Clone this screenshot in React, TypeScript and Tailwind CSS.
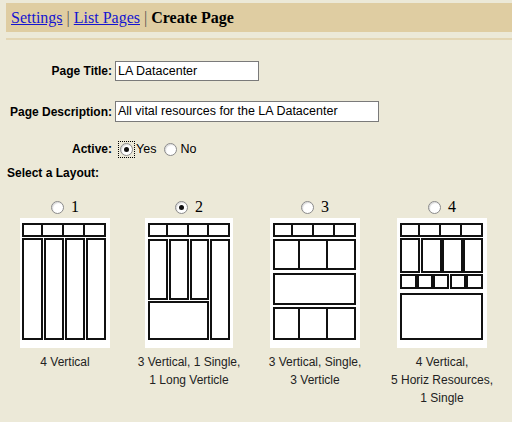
import React from 'react';

type Box = [number, number, number, number];

interface LayoutOption {
  id: number;
  width: number;
  boxes: Box[];
  dividers: [number, number, number][]; // x, y1, y2
  caption: string[];
}

const layouts: LayoutOption[] = [
  {
    id: 1,
    width: 90,
    boxes: [
      [3, 6, 82, 12],
      [3, 21, 19, 100],
      [25, 21, 18, 100],
      [46, 21, 18, 100],
      [67, 21, 18, 100],
    ],
    dividers: [
      [22, 6, 18],
      [43, 6, 18],
      [64, 6, 18],
    ],
    caption: ['4 Vertical'],
  },
  {
    id: 2,
    width: 88,
    boxes: [
      [4, 6, 80, 12],
      [4, 22, 18, 59],
      [25, 22, 18, 59],
      [46, 22, 17, 59],
      [66, 22, 18, 99],
      [4, 84, 59, 37],
    ],
    dividers: [
      [22, 6, 18],
      [43, 6, 18],
      [63, 6, 18],
    ],
    caption: ['3 Vertical, 1 Single,', '1 Long Verticle'],
  },
  {
    id: 3,
    width: 90,
    boxes: [
      [4, 6, 81, 12],
      [4, 22, 81, 29],
      [4, 56, 81, 30],
      [4, 90, 81, 31],
    ],
    dividers: [
      [22, 6, 18],
      [43, 6, 18],
      [64, 6, 18],
      [29, 22, 51],
      [57, 22, 51],
      [29, 90, 121],
      [57, 90, 121],
    ],
    caption: ['3 Vertical, Single,', '3 Verticle'],
  },
  {
    id: 4,
    width: 90,
    boxes: [
      [4, 6, 81, 12],
      [4, 21, 18, 33],
      [25, 21, 19, 33],
      [46, 21, 19, 33],
      [67, 21, 18, 33],
      [4, 57, 15, 13],
      [21, 57, 14, 13],
      [37, 57, 14, 13],
      [54, 57, 14, 13],
      [70, 57, 15, 13],
      [4, 76, 81, 45],
    ],
    dividers: [
      [22, 6, 18],
      [43, 6, 18],
      [64, 6, 18],
    ],
    caption: ['4 Vertical,', '5 Horiz Resources,', '1 Single'],
  },
];

function Radio({ checked, focus }: { checked?: boolean; focus?: boolean }) {
  const dot = (
    <span className="w-[13px] h-[13px] rounded-full border border-[#8a8a8a] bg-white flex items-center justify-center shadow-[inset_1px_1px_1px_rgba(0,0,0,0.15)]">
      {checked && <span className="w-[5px] h-[5px] rounded-full bg-[#111]" />}
    </span>
  );
  if (focus) {
    return <span className="border border-dotted border-black p-[1px] flex">{dot}</span>;
  }
  return dot;
}

function LayoutPicture({ layout }: { layout: LayoutOption }) {
  return (
    <svg width={layout.width} height={130} className="bg-white block">
      {layout.boxes.map(([x, y, w, h], i) => (
        <rect key={i} x={x} y={y} width={w} height={h} fill="white" stroke="#111" strokeWidth={2} />
      ))}
      {layout.dividers.map(([x, y1, y2], i) => (
        <line key={i} x1={x} y1={y1} x2={x} y2={y2} stroke="#111" strokeWidth={2} />
      ))}
    </svg>
  );
}

export default function App() {
  return (
    <div className="min-h-screen w-[512px] h-[422px] overflow-hidden bg-[#ece9d8] pt-[3px] font-['Liberation_Sans',Arial,sans-serif]">
      {/* Breadcrumb bar */}
      <div className="ml-[6px] h-[29px] bg-[#dfcda2] flex items-center pl-[5px] font-['Liberation_Serif','Times_New_Roman',serif] text-[16px] text-[#222]">
        <a href="#" className="text-[#1515d0] underline">Settings</a>
        <span className="mx-[4px] text-[#555]">|</span>
        <a href="#" className="text-[#1515d0] underline">List Pages</a>
        <span className="mx-[4px] text-[#555]">|</span>
        <span className="font-bold text-black">Create Page</span>
      </div>
      <div className="ml-[6px] mt-[6px] h-[2px] bg-[#e3d6b4]" />

      {/* Form */}
      <div className="mt-[21px] flex flex-col text-[12px] text-black">
        <div className="flex items-center h-[20px]">
          <label className="w-[112px] text-right font-bold">Page Title:</label>
          <div className="ml-[3px] w-[144px] h-[20px] bg-white border border-[#7a7a7a] flex items-center px-[2px] text-[12.5px]">
            LA Datacenter
          </div>
        </div>
        <div className="flex items-center h-[21px] mt-[20px]">
          <label className="w-[112px] text-right font-bold">Page Description:</label>
          <div className="ml-[3px] w-[264px] h-[21px] bg-white border border-[#7a7a7a] flex items-center px-[2px] text-[12.5px]">
            All vital resources for the LA Datacenter
          </div>
        </div>
        <div className="flex items-center h-[16px] mt-[19px]">
          <label className="w-[112px] text-right font-bold">Active:</label>
          <div className="ml-[6px] flex items-center text-[12.5px]">
            <Radio checked focus />
            <span className="ml-[1px]">Yes</span>
            <span className="ml-[8px]"><Radio /></span>
            <span className="ml-[3px]">No</span>
          </div>
        </div>
        <div className="mt-[7px] pl-[7px] font-bold">Select a Layout:</div>
      </div>

      {/* Layout options */}
      <div className="mt-[16px] pl-[2px] grid grid-cols-[126px_122px_130px_124px]">
        {layouts.map((layout) => (
          <div key={layout.id} className="flex flex-col items-center">
            <div className="flex items-center h-[18px] font-['Liberation_Serif','Times_New_Roman',serif] text-[16px]">
              <Radio checked={layout.id === 2} />
              <span className="ml-[7px]">{layout.id}</span>
            </div>
            <div className="mt-[2px]">
              <LayoutPicture layout={layout} />
            </div>
            <div className="mt-[5px] text-[12px] leading-[18px] text-[#222] text-center">
              {layout.caption.map((line) => (
                <div key={line}>{line}</div>
              ))}
            </div>
          </div>
        ))}
      </div>
    </div>
  );
}
